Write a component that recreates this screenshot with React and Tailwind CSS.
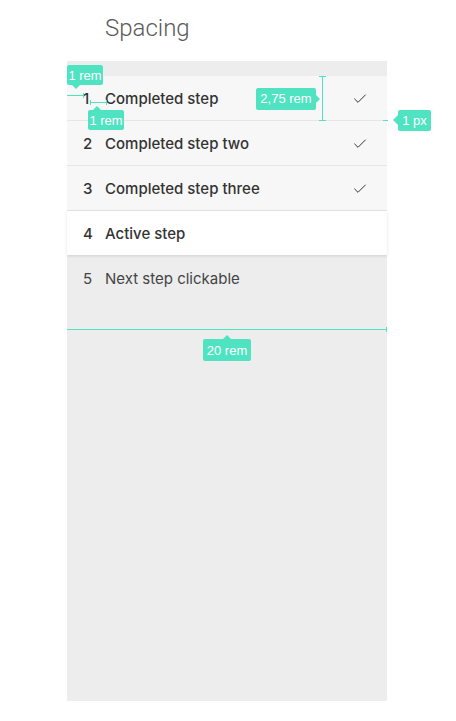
import { Check } from "lucide-react";

const steps = [
  { n: 1, label: "Completed step", state: "done" },
  { n: 2, label: "Completed step two", state: "done" },
  { n: 3, label: "Completed step three", state: "done" },
  { n: 4, label: "Active step", state: "active" },
  { n: 5, label: "Next step clickable", state: "next" },
];

const teal = "bg-[#50e3c2]";

function Step({ n, label, state }) {
  const row =
    state === "done"
      ? "h-[45px] pt-[2px] bg-[#f7f7f7] border-b border-[#e6e6e6]"
      : state === "active"
      ? "h-[44px] pt-[2px] bg-white relative z-10 shadow-[0_1px_3px_rgba(0,0,0,0.12)]"
      : "h-[46px] pt-[3px]";
  const weight = state === "next" ? "font-normal text-[#444]" : "font-medium";
  return (
    <div className={`flex items-center pl-4 pr-[19px] text-[15px] text-[#333] ${row}`}>
      <span className={`w-[7px] ${weight}`}>{n}</span>
      <span className={`ml-[15px] flex-1 ${weight}`}>{label}</span>
      {state === "done" && <Check size={16} strokeWidth={1.5} className="text-[#333]" />}
    </div>
  );
}

function Tag({ children, className = "" }) {
  return (
    <div
      className={`${teal} text-white text-[13px] leading-none rounded-[2px] flex items-center justify-center ${className}`}
      style={{ fontFamily: "'Liberation Sans', Arial, sans-serif" }}
    >
      {children}
    </div>
  );
}

export default function App() {
  return (
    <div
      className="relative w-[456px] h-[721px] bg-white pl-[67px]"
      style={{ fontFamily: "Inter, 'Noto Sans', sans-serif" }}
    >
      <h1
        className="pl-[38px] pt-[12px] h-[61px] text-[24px] leading-[32px] font-light text-[#5a5a5a]"
        style={{ fontFamily: "Roboto, sans-serif" }}
      >
        Spacing
      </h1>
      <div className="w-[320px] h-[640px] bg-[#ededed] pt-[15px]">
        {steps.map((s) => (
          <Step key={s.n} {...s} />
        ))}
      </div>

      {/* 1 rem : left padding */}
      <div className="absolute left-[67px] top-[65px] flex flex-col items-start">
        <Tag className="w-[36px] h-[20px]">1 rem</Tag>
        <div className="ml-[5px] border-x-[4px] border-x-transparent border-t-[4px] border-t-[#50e3c2]" />
        <div className="mt-[4px] flex items-center">
          <div className={`w-[16px] h-px ${teal}`} />
          <div className={`w-px h-[5px] ${teal}`} />
        </div>
      </div>

      {/* 1 rem : number to label */}
      <div className="absolute left-[88px] top-[100px] flex flex-col items-start">
        <div className="ml-[2px] flex items-center">
          <div className={`w-px h-[5px] ${teal}`} />
          <div className={`w-[15px] h-px ${teal}`} />
          <div className={`w-px h-[5px] ${teal}`} />
        </div>
        <div className="ml-[5px] mt-px border-x-[4px] border-x-transparent border-b-[4px] border-b-[#50e3c2]" />
        <Tag className="w-[36px] h-[20px]">1 rem</Tag>
      </div>

      {/* 2,75 rem : row height */}
      <div className="absolute left-[256px] top-[76px] flex items-center h-[45px]">
        <Tag className="w-[60px] h-[22px]">2,75 rem</Tag>
        <div className="border-y-[4px] border-y-transparent border-l-[4px] border-l-[#50e3c2]" />
        <div className="ml-[-1px] w-[7px] h-full flex flex-col items-center justify-between">
          <div className={`w-[7px] h-px ${teal}`} />
          <div className={`w-px flex-1 ${teal}`} />
          <div className={`w-[7px] h-px ${teal}`} />
        </div>
      </div>

      {/* 1 px : divider */}
      <div className="absolute left-[383px] top-[109px] flex items-center h-[22px]">
        <div className={`w-[5px] h-px ${teal}`} />
        <div className="ml-[5px] border-y-[5px] border-y-transparent border-r-[5px] border-r-[#50e3c2]" />
        <Tag className="w-[33px] h-[21px]">1 px</Tag>
      </div>

      {/* 20 rem : panel width */}
      <div className="absolute left-[67px] top-[327px] w-[320px] flex flex-col items-center">
        <div className="w-full flex items-center h-[5px]">
          <div className={`flex-1 h-px ${teal}`} />
          <div className={`w-px h-[5px] ${teal}`} />
        </div>
        <div className="mt-[3px] border-x-[4px] border-x-transparent border-b-[4px] border-b-[#50e3c2]" />
        <Tag className="w-[48px] h-[22px]">20 rem</Tag>
      </div>
    </div>
  );
}
